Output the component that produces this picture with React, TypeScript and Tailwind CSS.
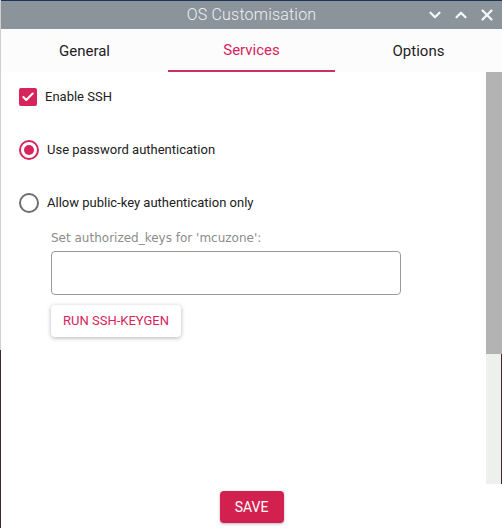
import { Check, ChevronDown, ChevronUp, X } from "lucide-react";

function Radio({ checked, label }: { checked?: boolean; label: string }) {
  return (
    <div className="flex h-[20px] items-center gap-[8px]">
      <span
        className={
          checked
            ? "flex h-[20px] w-[20px] items-center justify-center rounded-full border-2 border-[#d6245c]"
            : "flex h-[20px] w-[20px] items-center justify-center rounded-full border-2 border-[#6e6e6e]"
        }
      >
        {checked && <span className="h-[10px] w-[10px] rounded-full bg-[#d6245c]" />}
      </span>
      <span className="text-[13px] leading-[20px] text-[#212121]">{label}</span>
    </div>
  );
}

export default function App() {
  return (
    <div className="flex h-[528px] w-[502px] overflow-hidden bg-white font-['Roboto',sans-serif]">
      <div className="flex w-[1px] flex-col">
        <div className="h-[350px] bg-[#cfcfcf]" />
        <div className="flex-1 bg-[#4a2230]" />
      </div>

      <div className="flex flex-1 flex-col">
        {/* title bar */}
        <div className="flex h-[29px] items-center border-t border-[#1d3557] bg-[#8b939b]">
          <div className="w-[76px]" />
          <div className="flex-1 text-center text-[16px] font-light tracking-[0.2px] text-[#eef1f4]">
            OS Customisation
          </div>
          <div className="flex w-[76px] items-center gap-[8px] pr-[6px] text-[#f4f6f8]">
            <ChevronDown className="h-[18px] w-[18px]" strokeWidth={3} />
            <ChevronUp className="h-[18px] w-[18px]" strokeWidth={3} />
            <X className="h-[18px] w-[18px]" strokeWidth={3} />
          </div>
        </div>

        {/* tabs */}
        <div className="grid h-[43px] grid-cols-3 bg-[#fdfcfd] text-[15px]">
          <div className="flex items-center justify-center pt-[1px] text-[#222]">General</div>
          <div className="flex flex-col items-center">
            <div className="flex flex-1 items-center pt-[1px] text-[#d6245c]">Services</div>
            <div className="h-[2px] w-full bg-[#cc2f64]" />
          </div>
          <div className="flex items-center justify-center pt-[1px] text-[#222]">Options</div>
        </div>

        {/* body */}
        <div className="flex h-[412px]">
          <div className="flex-1 pl-[18px] pt-[16px]">
            <div className="flex h-[18px] items-center gap-[8px]">
              <span className="flex h-[18px] w-[18px] items-center justify-center rounded-[2px] bg-[#d6245c]">
                <Check className="h-[14px] w-[14px] text-white" strokeWidth={3.5} />
              </span>
              <span className="text-[13px] leading-[18px] text-[#212121]">Enable SSH</span>
            </div>

            <div className="mt-[34px]">
              <Radio checked label="Use password authentication" />
            </div>
            <div className="mt-[33px]">
              <Radio label="Allow public-key authentication only" />
            </div>

            <div className="ml-[32px] mt-[16px]">
              <div className="font-['DejaVu_Sans',sans-serif] text-[12px] leading-[18px] text-[#8c8c8c]">
                Set authorized_keys for 'mcuzone':
              </div>
              <div className="mt-[4px] h-[44px] w-[350px] rounded-[4px] border border-[#9a9a9a] bg-white" />
              <button className="mt-[10px] flex h-[32px] w-[130px] items-center justify-center rounded-[4px] bg-white text-[13px] text-[#d6245c] shadow-[0_1px_4px_rgba(0,0,0,0.3)]">
                RUN SSH-KEYGEN
              </button>
            </div>
          </div>

          <div className="flex w-[15px] flex-col bg-[#eef0ee]">
            <div className="h-[282px] bg-[#b3b3b3]" />
          </div>
          <div className="flex w-[1px] flex-col">
            <div className="h-[282px] bg-[#b3b3b3]" />
            <div className="flex-1 bg-[#4a2230]" />
          </div>
        </div>

        {/* footer */}
        <div className="flex flex-1 items-start justify-center pt-[7px]">
          <button className="flex h-[32px] w-[64px] items-center justify-center rounded-[4px] bg-[#d3214f] text-[14px] text-white shadow-[0_1px_3px_rgba(0,0,0,0.3)]">
            SAVE
          </button>
        </div>
      </div>
    </div>
  );
}
